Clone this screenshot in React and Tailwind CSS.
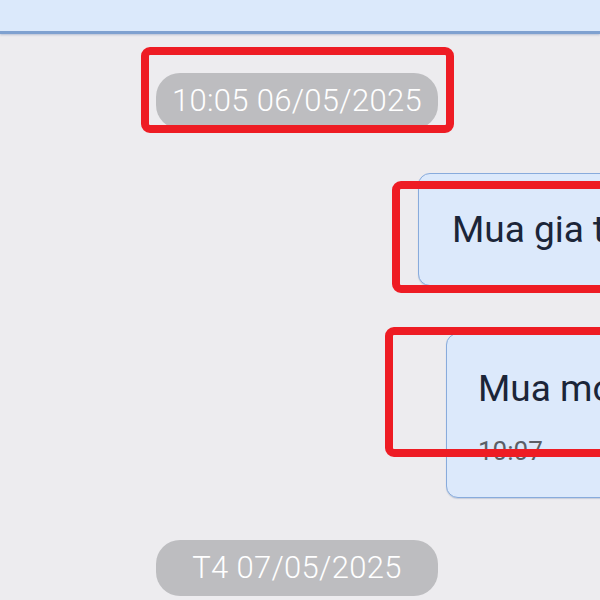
import React from 'react';

const font = { fontFamily: 'Roboto, "Noto Sans", sans-serif' };

const Pill = ({ children }) => (
  <div className="flex">
    <div className="ml-[156px] w-[282px] h-[56px] rounded-[24px] bg-[#bdbdc0] flex items-center justify-center text-[31px] font-light text-white tracking-[0.3px]">
      {children}
    </div>
  </div>
);

const RedBox = ({ className }) => (
  <div className={`absolute border-[8px] border-[#ee1c24] rounded-[9px] ${className}`} />
);

export default function App() {
  return (
    <div className="relative w-[600px] h-[600px] overflow-hidden bg-[#edecef]" style={font}>
      {/* header */}
      <div className="h-[34px] bg-[#dbe9fb] border-b-[3px] border-[#7fa1d0] shadow-[0_1px_2px_rgba(80,110,160,0.35)]" />

      <div className="flex flex-col">
        <div className="mt-[39px]">
          <Pill>10:05 06/05/2025</Pill>
        </div>

        {/* sent message 1 */}
        <div className="mt-[44px] ml-[418px] w-[320px] h-[113px] rounded-[12px] bg-[#dce9fb] border-[1.5px] border-[#88abdc] pl-[33px] pt-[36px] shadow-[0_1px_1px_rgba(80,110,160,0.25)]">
          <p className="text-[37px] leading-[40px] text-[#1b2538] whitespace-nowrap">Mua gia tăng</p>
        </div>

        {/* sent message 2 */}
        <div className="mt-[47px] ml-[446px] w-[320px] h-[165px] rounded-[12px] bg-[#dce9fb] border-[1.5px] border-[#88abdc] pl-[31px] pt-[35px] shadow-[0_1px_1px_rgba(80,110,160,0.25)]">
          <p className="text-[37px] leading-[40px] text-[#1b2538] whitespace-nowrap">Mua mới</p>
          <p className="mt-[28px] text-[26px] leading-[28px] text-[#5b5f66]">10:07</p>
        </div>

        <div className="mt-[42px]">
          <Pill>T4 07/05/2025</Pill>
        </div>
      </div>

      {/* annotation boxes */}
      <RedBox className="left-[141px] top-[47px] w-[313px] h-[86px]" />
      <RedBox className="left-[392px] top-[181px] w-[240px] h-[112px]" />
      <RedBox className="left-[385px] top-[327px] w-[250px] h-[130px]" />
    </div>
  );
}
